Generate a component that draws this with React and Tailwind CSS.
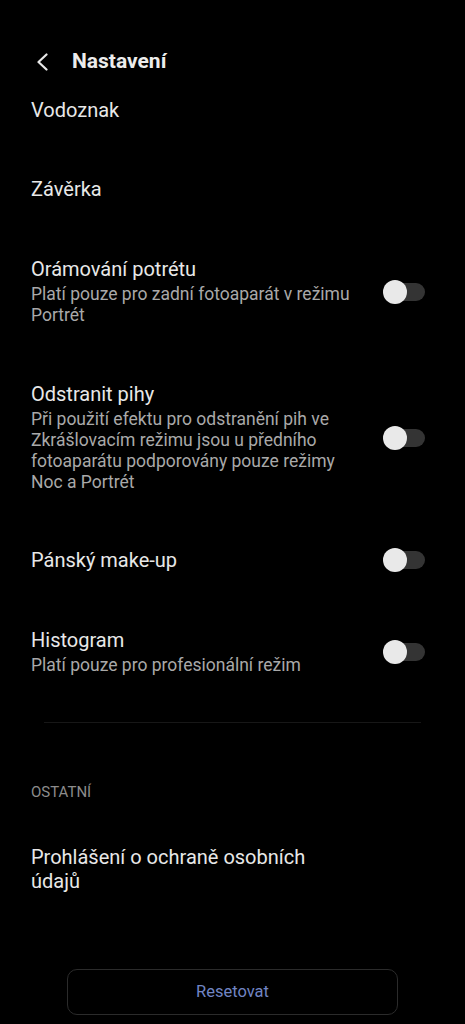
import React from 'react';

const Toggle = () => (
    <div className="relative w-[42px] h-[24px] shrink-0 flex items-center">
        <div className="absolute right-0 w-[36px] h-[18px] rounded-full bg-[#343434]"></div>
        <div className="absolute left-0 w-[24px] h-[24px] rounded-full bg-[#e9e9e9]"></div>
    </div>
);

const Row = ({ title, lines, toggle, className }) => (
    <div className={"flex items-center justify-between pr-[40px] " + (className || '')}>
        <div className="w-[340px]">
            <div className="text-[20px] leading-[24px] text-[#e8e8e8]">{title}</div>
            {lines && (
                <div className="mt-[3px] text-[17.5px] leading-[21px] text-[#a9a9a9]">
                    {lines.map((l) => (
                        <div key={l}>{l}</div>
                    ))}
                </div>
            )}
        </div>
        {toggle && <Toggle />}
    </div>
);

const App = () => {
    return (
        <div className="w-[465px] h-[1024px] bg-black overflow-hidden font-['Roboto',sans-serif]">
            <div className="mt-[34px] h-[56px] flex items-center pl-[35px]">
                <svg width="14" height="18" viewBox="0 0 14 18" fill="none">
                    <path d="M11.5 1.5 L3.5 9 L11.5 16.5" stroke="#e8e8e8" strokeWidth="2.2" strokeLinecap="round" strokeLinejoin="round" />
                </svg>
                <span className="ml-[23px] text-[21px] font-bold text-[#ececec]">Nastavení</span>
            </div>

            <div className="pl-[31px]">
                <div className="h-[40px] flex items-center text-[20px] text-[#e8e8e8]">Vodoznak</div>
                <div className="mt-[39px] h-[40px] flex items-center text-[20px] text-[#e8e8e8]">Závěrka</div>

                <Row
                    className="mt-[48px]"
                    title="Orámování potrétu"
                    lines={['Platí pouze pro zadní fotoaparát v režimu', 'Portrét']}
                    toggle
                />
                <Row
                    className="mt-[56px]"
                    title="Odstranit pihy"
                    lines={[
                        'Při použití efektu pro odstranění pih ve',
                        'Zkrášlovacím režimu jsou u předního',
                        'fotoaparátu podporovány pouze režimy',
                        'Noc a Portrét',
                    ]}
                    toggle
                />
                <Row className="mt-[55px]" title="Pánský make-up" toggle />
                <Row
                    className="mt-[56px]"
                    title="Histogram"
                    lines={['Platí pouze pro profesionální režim']}
                    toggle
                />
            </div>

            <div className="mt-[46px] mx-[44px] h-px bg-[#171717]"></div>

            <div className="pl-[31px]">
                <div className="mt-[59px] text-[15px] leading-[20px] text-[#8c8c8c]">OSTATNÍ</div>
                <div className="mt-[43px] text-[20px] leading-[24px] text-[#e8e8e8]">
                    <div>Prohlášení o ochraně osobních</div>
                    <div>údajů</div>
                </div>
            </div>

            <div className="mt-[76px] flex justify-center">
                <button className="w-[331px] h-[46px] rounded-[10px] border border-[#2b2b2b] text-[16.5px] text-[#7185c4]">
                    Resetovat
                </button>
            </div>
        </div>
    );
};

export default App;
